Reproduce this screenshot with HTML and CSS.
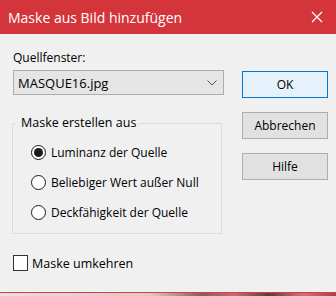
FILE: index.html
```html
<!DOCTYPE html>
<html lang="de">
<head>
  <meta charset="UTF-8" />
  <title>Maske aus Bild hinzufügen</title>
  <link rel="stylesheet" href="styles.css">
</head>
<body>
  <div class="window">
    <div class="titlebar">
      <span class="title">Maske aus Bild hinzufügen</span>
      <svg class="close" width="12" height="12" viewBox="0 0 12 12">
        <path d="M1 1 L11 11 M11 1 L1 11" stroke="#fff" stroke-width="1.2" fill="none" />
      </svg>
    </div>
    <div class="content">
      <div class="left">
        <div class="label">Quellfenster:</div>
        <div class="select">
          <span>MASQUE16.jpg</span>
          <svg width="10" height="6" viewBox="0 0 10 6">
            <path d="M0.5 0.5 L5 5 L9.5 0.5" stroke="#555" stroke-width="1" fill="none" />
          </svg>
        </div>
        <fieldset class="group">
          <legend>Maske erstellen aus</legend>
          <label class="radio"><span class="dot checked"></span>Luminanz der Quelle</label>
          <label class="radio"><span class="dot"></span>Beliebiger Wert außer Null</label>
          <label class="radio"><span class="dot"></span>Deckfähigkeit der Quelle</label>
        </fieldset>
        <label class="check"><span class="box"></span>Maske umkehren</label>
      </div>
      <div class="buttons">
        <button class="btn default">OK</button>
        <button class="btn">Abbrechen</button>
        <button class="btn">Hilfe</button>
      </div>
    </div>
    <div class="strip"></div>
  </div>
</body>
</html>
```

FILE: styles.css
```css
* {
  margin: 0;
  padding: 0;
  box-sizing: border-box;
}
body {
  width: 336px;
  height: 296px;
  overflow: hidden;
  background: #f0f0f0;
  font-family: 'Open Sans', 'Noto Sans', sans-serif;
  font-size: 12px;
  color: #000;
}
.window {
  display: flex;
  flex-direction: column;
  height: 296px;
}
.titlebar {
  height: 34px;
  background: #d4353b;
  display: flex;
  align-items: center;
  justify-content: space-between;
  padding: 0 12px 0 8px;
  color: #fff;
}
.title {
  font-size: 14px;
}
.close {
  margin-right: 1px;
}
.content {
  flex: 1;
  display: flex;
  padding: 15px 0 0 13px;
  border-bottom: 1px solid #e0393e;
}
.left {
  width: 211px;
}
.label {
  height: 17px;
  line-height: 17px;
  font-size: 12px;
}
.select {
  margin-top: 4px;
  height: 25px;
  border: 1px solid #adadad;
  background: #e5e5e5;
  display: flex;
  align-items: center;
  justify-content: space-between;
  padding: 0 6px 0 4px;
  font-size: 13px;
}
.group {
  margin: 20px 2px 0 -1px;
  height: 119px;
  border: 1px solid #dcdcdc;
  padding: 6px 0 0 0;
}
.group legend {
  margin-left: 3px;
  padding: 0 3px 0 5px;
  font-size: 12.5px;
  line-height: 16px;
}
.radio {
  display: flex;
  align-items: center;
  height: 30px;
  margin-left: 18px;
  font-size: 12px;
}
.dot {
  width: 15px;
  height: 15px;
  border: 1px solid #1a1a1a;
  border-radius: 50%;
  background: #fff;
  margin-right: 5px;
  display: flex;
  align-items: center;
  justify-content: center;
}
.dot.checked::after {
  content: "";
  width: 9px;
  height: 9px;
  border-radius: 50%;
  background: #1a1a1a;
}
.check {
  display: flex;
  align-items: center;
  margin-top: 21px;
  height: 16px;
  font-size: 12.5px;
}
.box {
  width: 15px;
  height: 16px;
  border: 1px solid #333;
  background: #fff;
  margin-right: 4px;
}
.buttons {
  display: flex;
  flex-direction: column;
  gap: 14px;
  margin: 22px 0 0 18px;
}
.btn {
  width: 86px;
  height: 27px;
  border: 1px solid #adadad;
  background: #e1e1e1;
  font-family: inherit;
  font-size: 12px;
  color: #000;
}
.btn.default {
  border-color: #0078d7;
  background: #e5f1fb;
}
.strip {
  height: 3px;
  background: linear-gradient(90deg, #e8dfdf 0%, #d9c8c8 45%, #8a5a60 60%, #c46b7a 70%, #5a3a3e 80%, #d07080 90%, #a04050 100%);
}
```
